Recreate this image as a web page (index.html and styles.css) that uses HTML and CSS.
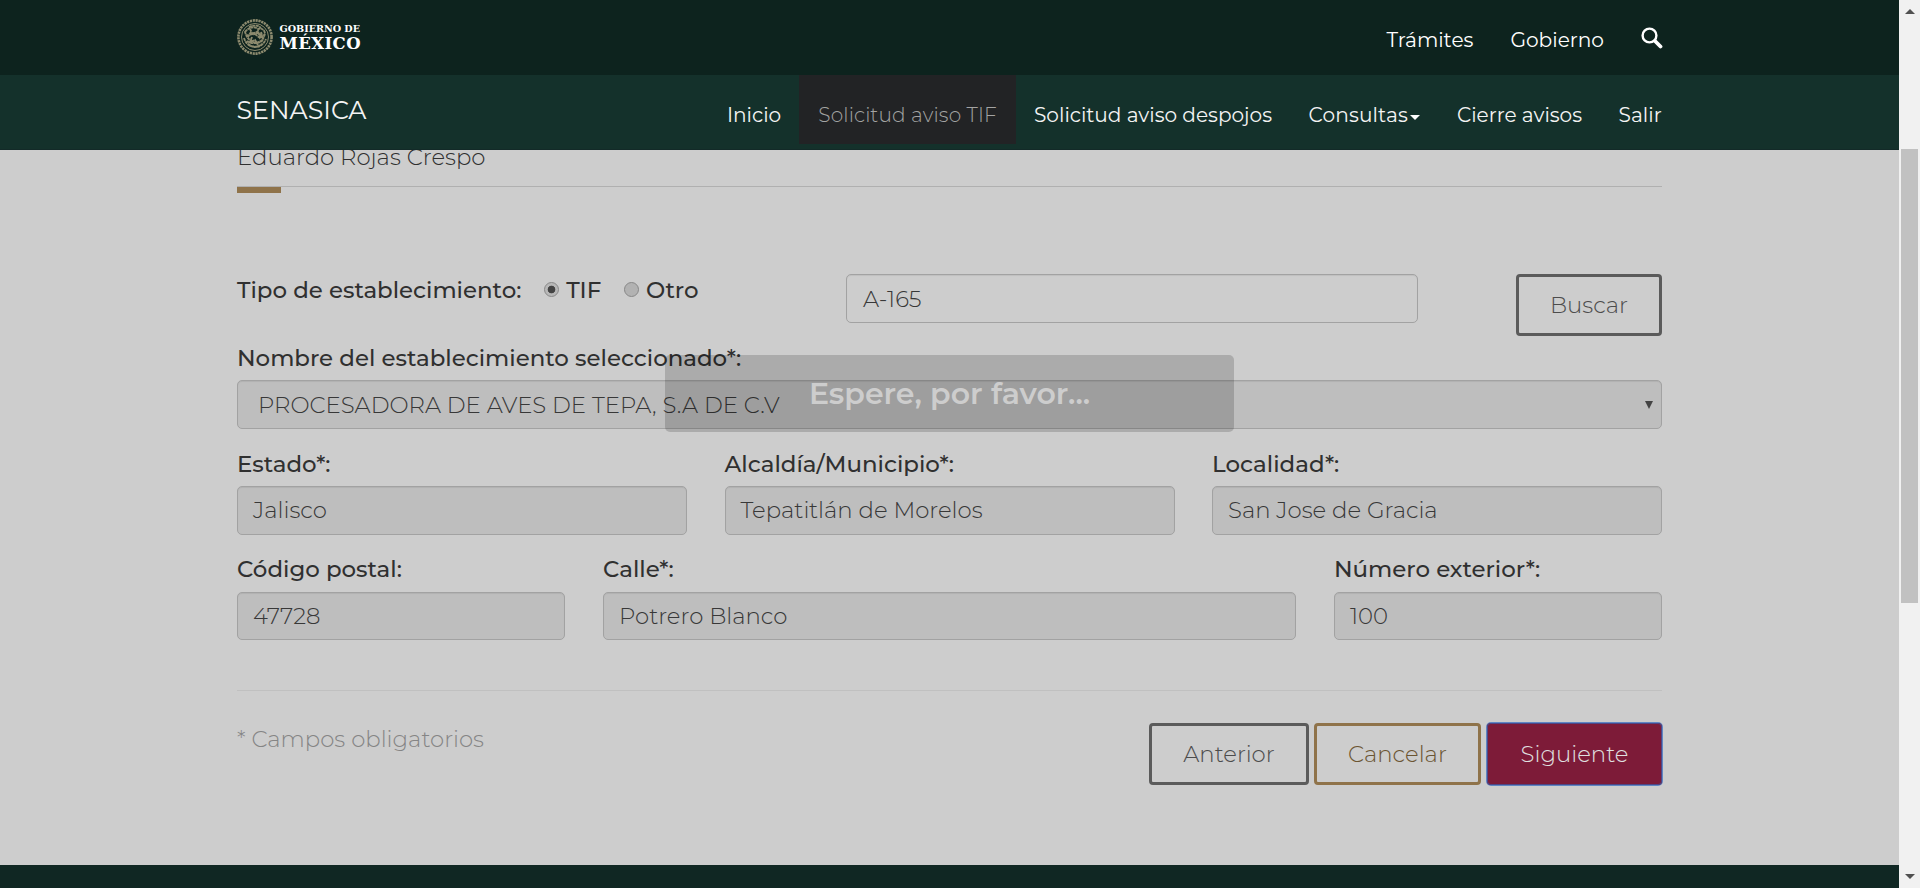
FILE: index.html
```html
<!DOCTYPE html>
<html lang="es">
<head>
<meta charset="utf-8">
<title>SENASICA</title>
<link rel="stylesheet" href="styles.css">
</head>
<body>
<div class="app">
<div class="page">
  <header class="topbar">
    <div class="container">
      <svg class="logo" viewBox="0 0 130 40" width="130" height="40">
        <g fill="none" stroke="#8c8a6e">
          <circle cx="18" cy="20" r="16.600" stroke-width="2.600" stroke-dasharray="2.200 .7"/>
          <circle cx="18" cy="20" r="13.500" stroke-width="1"/>
          <path d="M8 15c4-5 9-6 13-3 3-1 6 0 7 4-1 5-3 8-6 9-5 2-9-1-12-5zM9 18c3 1 5-1 8-2s6 1 9 4M10 24c4 3 12 3 16-1M13 12l3 6 5-4 2 7 4-3M7 21c2 6 6 9 11 9s9-3 11-8M15 20l-2 5 5-2 3 5M12 10c4-2 9-2 12 1M11 27c4 3 9 4 14 0M18 17l5 4M14 15l-3 5M24 15l2 6" stroke-width="1.900" stroke-dasharray="3 .5"/>
        </g>
        <g class="logo-text">
          <text x="42.500" y="15" font-size="10" textLength="80.500" lengthAdjust="spacingAndGlyphs">GOBIERNO DE</text>
          <text x="42.500" y="32" font-size="16.500" textLength="81" lengthAdjust="spacing">MÉXICO</text>
        </g>
      </svg>
      <nav class="top-links">
        <a>Trámites</a>
        <a>Gobierno</a>
        <svg class="search" viewBox="0 0 22 22" width="22" height="22"><circle cx="8.500" cy="8.500" r="6.900" fill="none" stroke="#fff" stroke-width="2.400"/><path d="M14 14l5.500 5.500" stroke="#fff" stroke-width="3.800" stroke-linecap="round"/></svg>
      </nav>
    </div>
  </header>
  <div class="navbar">
    <div class="container">
      <span class="brand">SENASICA</span>
      <nav class="menu">
        <a>Inicio</a>
        <a class="active">Solicitud aviso TIF</a>
        <a>Solicitud aviso despojos</a>
        <a class="dropdown">Consultas<i class="caret"></i></a>
        <a>Cierre avisos</a>
        <a>Salir</a>
      </nav>
    </div>
  </div>
  <main class="container content">
    <div class="user">Eduardo Rojas Crespo</div>
    <div class="row first">
      <div class="kind"><b>Tipo de establecimiento:</b><i class="radio on"></i><b>TIF</b><i class="radio"></i><b>Otro</b></div>
      <div class="field search-field">A-165</div>
      <div class="btn buscar">Buscar</div>
    </div>
    <label class="l-nombre">Nombre del establecimiento seleccionado*:</label>
    <div class="field off select"><span>PROCESADORA DE AVES DE TEPA, S.A DE C.V</span><i class="arrow"></i></div>
    <div class="row thirds">
      <div><label>Estado*:</label><div class="field off">Jalisco</div></div>
      <div><label>Alcaldía/Municipio*:</label><div class="field off">Tepatitlán de Morelos</div></div>
      <div><label>Localidad*:</label><div class="field off">San Jose de Gracia</div></div>
    </div>
    <div class="row address">
      <div><label>Código postal:</label><div class="field off">47728</div></div>
      <div><label>Calle*:</label><div class="field off">Potrero Blanco</div></div>
      <div><label>Número exterior*:</label><div class="field off">100</div></div>
    </div>
    <div class="actions">
      <span class="note">* Campos obligatorios</span>
      <div class="buttons">
        <div class="btn anterior">Anterior</div>
        <div class="btn cancelar">Cancelar</div>
        <div class="btn siguiente">Siguiente</div>
      </div>
    </div>
  </main>
  <footer class="footer"></footer>
  <div class="wait">Espere, por favor...</div>
</div>
<div class="scrollbar"><i class="up"></i><i class="thumb"></i><i class="down"></i></div>
</div>
</body>
</html>
```
FILE: styles.css
```css
* { box-sizing: border-box; }
body { margin: 0; font-family: Montserrat, Inter, sans-serif; font-size: 22.800px; font-weight: 300; color: #383838; background: #cdcdcd; overflow: hidden; }
.app { display: flex; height: 888px; white-space: nowrap; }
.page { position: relative; flex: 1; display: flex; flex-direction: column; }
.container { width: 1425px; margin-left: 237px; }
.topbar { height: 75px; background: #0d231e; }
.topbar .container { display: flex; justify-content: space-between; }
.logo { margin: 17px 0 0; }
.logo-text { fill: #fff; font-family: "DejaVu Serif", serif; font-weight: 700; }
.top-links { display: flex; gap: 37px; padding-top: 27px; line-height: 26px; font-size: 20.150px; font-weight: 400; color: #fff; }
.search { margin-right: -1px; }
.navbar { height: 75px; background: #14312b; border-bottom: 1px solid #132a28; }
.navbar .container { display: flex; justify-content: space-between; }
.brand { font-size: 25.300px; font-weight: 400; color: #f4f4f4; line-height: 30px; padding-top: 20px; margin-left: -.5px; }
.menu { display: flex; margin-right: -18px; font-size: 20.100px; font-weight: 400; color: #f4f4f4; }
.menu a { display: flex; height: 69px; line-height: 26px; padding: 27px 18.300px 0; }
.menu .dropdown { letter-spacing: .15px; padding-right: 18.800px; }
.menu .active { background: #222325; color: #a3a3a3; font-weight: 300; letter-spacing: .15px; padding: 27px 18.800px 0; }
.caret { border: 5px solid transparent; border-top-color: #fff; border-bottom: 0; height: 5px; margin: 13px 0 0 2px; }
.content { flex: none; height: 715px; }
.user { border-bottom: 1px solid #b0b0b0; line-height: 28px; margin-top: -7px; height: 44px; position: relative; color: #303030; clip-path: inset(7px 0 -10px 0); }
.user::after { content: ""; position: absolute; left: 0; top: 44px; width: 44px; height: 6px; background: #8f734a; }
.row { display: flex; }
.first { margin-top: 87px; height: 62px; }
.kind { display: flex; width: 609px; line-height: 26px; padding-top: 3px; color: #303030; font-size: 22.900px; }
.kind b, label { font-weight: 500; }
.radio { width: 15px; height: 15px; border-radius: 50%; border: 1px solid #888; background: #b2b2b2; margin: 5px 7px 0 22.800px; }
.on { background: radial-gradient(circle, #444 0 3.500px, #b8b8b8 4.200px); }
.field { height: 49px; border: 1px solid #a2a2a2; border-radius: 5px; line-height: 47px; padding-left: 15px; box-shadow: inset 0 1px 1px rgba(0,0,0,.07); }
.search-field { width: 572px; margin-right: 98px; padding-left: 16px; line-height: 48px; }
.off { background: #bebebe; }
.btn { border: 3px solid #5b5b5b; border-radius: 4px; height: 62px; line-height: 57px; display: flex; justify-content: center; color: #4c4c4c; }
.buscar { width: 146px; }
label { display: block; color: #303030; line-height: 26px; font-size: 22.920px; }
.l-nombre { margin-top: 9px; }
.select { margin-top: 9px; display: flex; justify-content: space-between; padding-left: 20px; font-size: 22.750px; line-height: 48px; }
.arrow { border: 4px solid transparent; border-top: 8px solid #444; border-bottom: 0; margin: 20px 8px 0 0; height: 8px; }
.thirds { display: grid; grid-template-columns: repeat(3, 1fr); gap: 37.500px; margin-top: 22px; }
.thirds label { height: 35px; }
.address label { height: 36px; }
.address { display: grid; grid-template-columns: 328px 693px 328px; gap: 38px; margin-top: 21px; }
.address .field { height: 48px; line-height: 46px; }
.actions { display: flex; justify-content: space-between; border-top: 1px solid #c0c0c0; margin-top: 50px; padding-top: 32px; }
.note { color: #858585; line-height: 33px; }
.buttons { display: flex; gap: 5px; }
.anterior { width: 160px; }
.cancelar { width: 167px; border-color: #8f734a; color: #6b5532; }
.siguiente { width: 175px; margin-left: 1px; background: #7d1b38; border: 0; line-height: 63px; color: #e0e0e0; box-shadow: 0 0 0 1px #5f86c4, inset 0 0 0 1px #4c4686; }
.footer { height: 23px; background: #102723; }
.wait { position: absolute; left: 665px; top: 355px; width: 569px; height: 77px; border-radius: 5px; background: rgba(0,0,0,.165); display: flex; justify-content: center; font-size: 30px; font-weight: 600; color: #cdcdcd; line-height: 78px; }
.scrollbar { width: 21px; background: #f1f1f1; display: flex; flex-direction: column; align-items: center; }
.thumb { width: 17px; height: 454px; background: #c1c1c1; margin-top: 135px; }
.up, .down { border: 5px solid transparent; width: 0; height: 0; }
.up { border-bottom-color: #505050; border-top: 0; margin-top: 9px; }
.down { border-top-color: #505050; border-bottom: 0; margin-top: 271px; }
```
